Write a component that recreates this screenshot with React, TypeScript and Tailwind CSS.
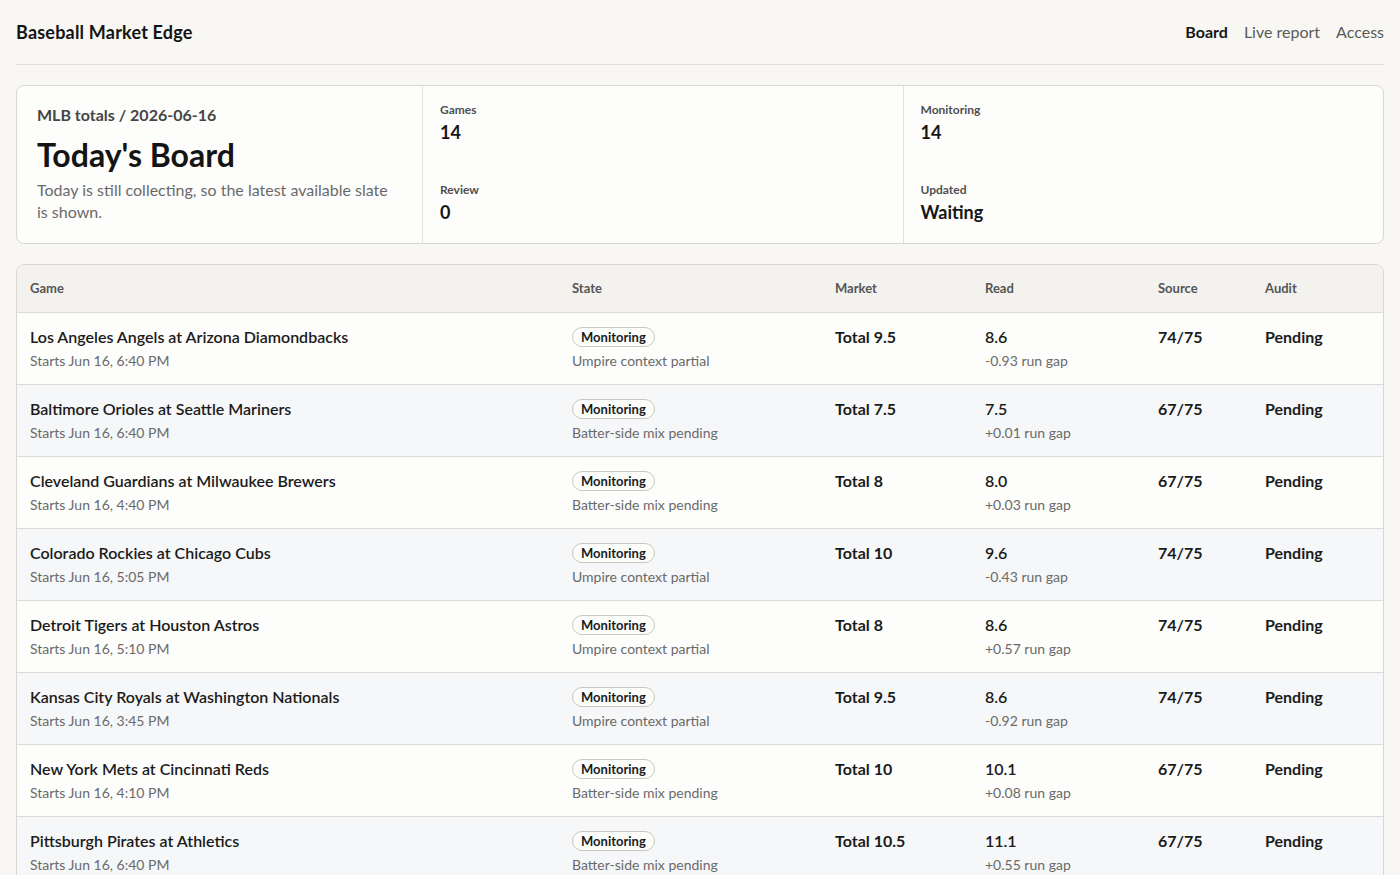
import React from 'react';

type Game = {
  name: string;
  starts: string;
  note: string;
  market: string;
  read: string;
  gap: string;
  source: string;
};

const games: Game[] = [
  { name: 'Los Angeles Angels at Arizona Diamondbacks', starts: 'Starts Jun 16, 6:40 PM', note: 'Umpire context partial', market: 'Total 9.5', read: '8.6', gap: '-0.93 run gap', source: '74/75' },
  { name: 'Baltimore Orioles at Seattle Mariners', starts: 'Starts Jun 16, 6:40 PM', note: 'Batter-side mix pending', market: 'Total 7.5', read: '7.5', gap: '+0.01 run gap', source: '67/75' },
  { name: 'Cleveland Guardians at Milwaukee Brewers', starts: 'Starts Jun 16, 4:40 PM', note: 'Batter-side mix pending', market: 'Total 8', read: '8.0', gap: '+0.03 run gap', source: '67/75' },
  { name: 'Colorado Rockies at Chicago Cubs', starts: 'Starts Jun 16, 5:05 PM', note: 'Umpire context partial', market: 'Total 10', read: '9.6', gap: '-0.43 run gap', source: '74/75' },
  { name: 'Detroit Tigers at Houston Astros', starts: 'Starts Jun 16, 5:10 PM', note: 'Umpire context partial', market: 'Total 8', read: '8.6', gap: '+0.57 run gap', source: '74/75' },
  { name: 'Kansas City Royals at Washington Nationals', starts: 'Starts Jun 16, 3:45 PM', note: 'Umpire context partial', market: 'Total 9.5', read: '8.6', gap: '-0.92 run gap', source: '74/75' },
  { name: 'New York Mets at Cincinnati Reds', starts: 'Starts Jun 16, 4:10 PM', note: 'Batter-side mix pending', market: 'Total 10', read: '10.1', gap: '+0.08 run gap', source: '67/75' },
  { name: 'Pittsburgh Pirates at Athletics', starts: 'Starts Jun 16, 6:40 PM', note: 'Batter-side mix pending', market: 'Total 10.5', read: '11.1', gap: '+0.55 run gap', source: '67/75' },
];

function Stat({ label, value }: { label: string; value: string }) {
  return (
    <div>
      <div className="text-[12px] leading-4 font-bold text-[#4f4f4f]">{label}</div>
      <div className="mt-[3px] text-[18px] leading-[22px] font-bold text-[#161616]">{value}</div>
    </div>
  );
}

export default function App() {
  return (
    <div
      className="min-h-screen bg-[#f8f7f3] px-4 text-[#1b1b1b]"
      style={{ fontFamily: 'Lato, "Open Sans", sans-serif' }}
    >
      {/* top bar */}
      <header className="flex h-[65px] items-center justify-between border-b border-[#e2e0da]">
        <div className="text-[18px] font-bold tracking-[0.2px] text-[#141414]">Baseball Market Edge</div>
        <nav className="flex items-center gap-4 text-[16px]">
          <span className="font-bold text-[#161616]">Board</span>
          <span className="text-[#5a5a5a]">Live report</span>
          <span className="text-[#5a5a5a]">Access</span>
        </nav>
      </header>

      {/* summary */}
      <section className="mt-5 grid grid-cols-[405px_1fr_1fr] rounded-lg border border-[#d9d7d1] bg-[#fdfdfb]">
        <div className="px-5 pt-[18px] pb-5">
          <div className="text-[16px] leading-[22px] font-bold text-[#454545]">MLB totals / 2026-06-16</div>
          <h1 className="mt-[10px] text-[32px] leading-[38px] font-bold text-[#141414]">Today's Board</h1>
          <p className="mt-[5px] text-[16px] leading-[22px] text-[#6a6a6a]">
            Today is still collecting, so the latest available slate is shown.
          </p>
        </div>
        <div className="flex flex-col justify-between border-l border-[#e2e0da] pl-[17px] pt-4 pb-5">
          <Stat label="Games" value="14" />
          <Stat label="Review" value="0" />
        </div>
        <div className="flex flex-col justify-between border-l border-[#e2e0da] pl-[17px] pt-4 pb-5">
          <Stat label="Monitoring" value="14" />
          <Stat label="Updated" value="Waiting" />
        </div>
      </section>

      {/* board table */}
      <section className="mt-5 overflow-hidden rounded-lg border border-[#d9d7d1] bg-[#fdfdfb]">
        <table className="w-full table-fixed border-collapse text-left">
          <colgroup>
            <col className="w-[542px]" />
            <col className="w-[263px]" />
            <col className="w-[150px]" />
            <col className="w-[173px]" />
            <col className="w-[107px]" />
            <col />
          </colgroup>
          <thead>
            <tr className="h-[47px] bg-[#f3f2ee] text-[13px] text-[#555]">
              <th className="pl-[13px] font-bold">Game</th>
              <th className="pl-[13px] font-bold">State</th>
              <th className="pl-[13px] font-bold">Market</th>
              <th className="pl-[13px] font-bold">Read</th>
              <th className="pl-[13px] font-bold">Source</th>
              <th className="pl-[13px] font-bold">Audit</th>
            </tr>
          </thead>
          <tbody>
            {games.map((g, i) => (
              <tr
                key={g.name}
                className={`border-t border-[#dcdad4] align-top ${i % 2 === 1 ? 'bg-[#f6f7f8]' : 'bg-[#fdfdfb]'}`}
              >
                <td className="pl-[13px] pt-[14px] pb-[13px]">
                  <div className="text-[16px] leading-5 font-semibold text-[#1b1b1b]">{g.name}</div>
                  <div className="mt-1 text-[14px] leading-5 text-[#6a6a6a]">{g.starts}</div>
                </td>
                <td className="pl-[13px] pt-[14px] pb-[13px]">
                  <div className="flex h-5 w-fit items-center rounded-full border border-[#c9c7c1] bg-[#fdfdfb] px-2 text-[13px] leading-4 font-bold text-[#1b1b1b]">
                    Monitoring
                  </div>
                  <div className="mt-1 text-[14px] leading-5 text-[#6a6a6a]">{g.note}</div>
                </td>
                <td className="pl-[13px] pt-[14px] pb-[13px]">
                  <div className="text-[16px] leading-5 font-bold">{g.market}</div>
                </td>
                <td className="pl-[13px] pt-[14px] pb-[13px]">
                  <div className="text-[16px] leading-5 font-semibold">{g.read}</div>
                  <div className="mt-1 text-[14px] leading-5 text-[#6a6a6a]">{g.gap}</div>
                </td>
                <td className="pl-[13px] pt-[14px] pb-[13px]">
                  <div className="text-[16px] leading-5 font-bold">{g.source}</div>
                </td>
                <td className="pl-[13px] pt-[14px] pb-[13px]">
                  <div className="text-[16px] leading-5 font-bold">Pending</div>
                </td>
              </tr>
            ))}
          </tbody>
        </table>
      </section>
    </div>
  );
}
